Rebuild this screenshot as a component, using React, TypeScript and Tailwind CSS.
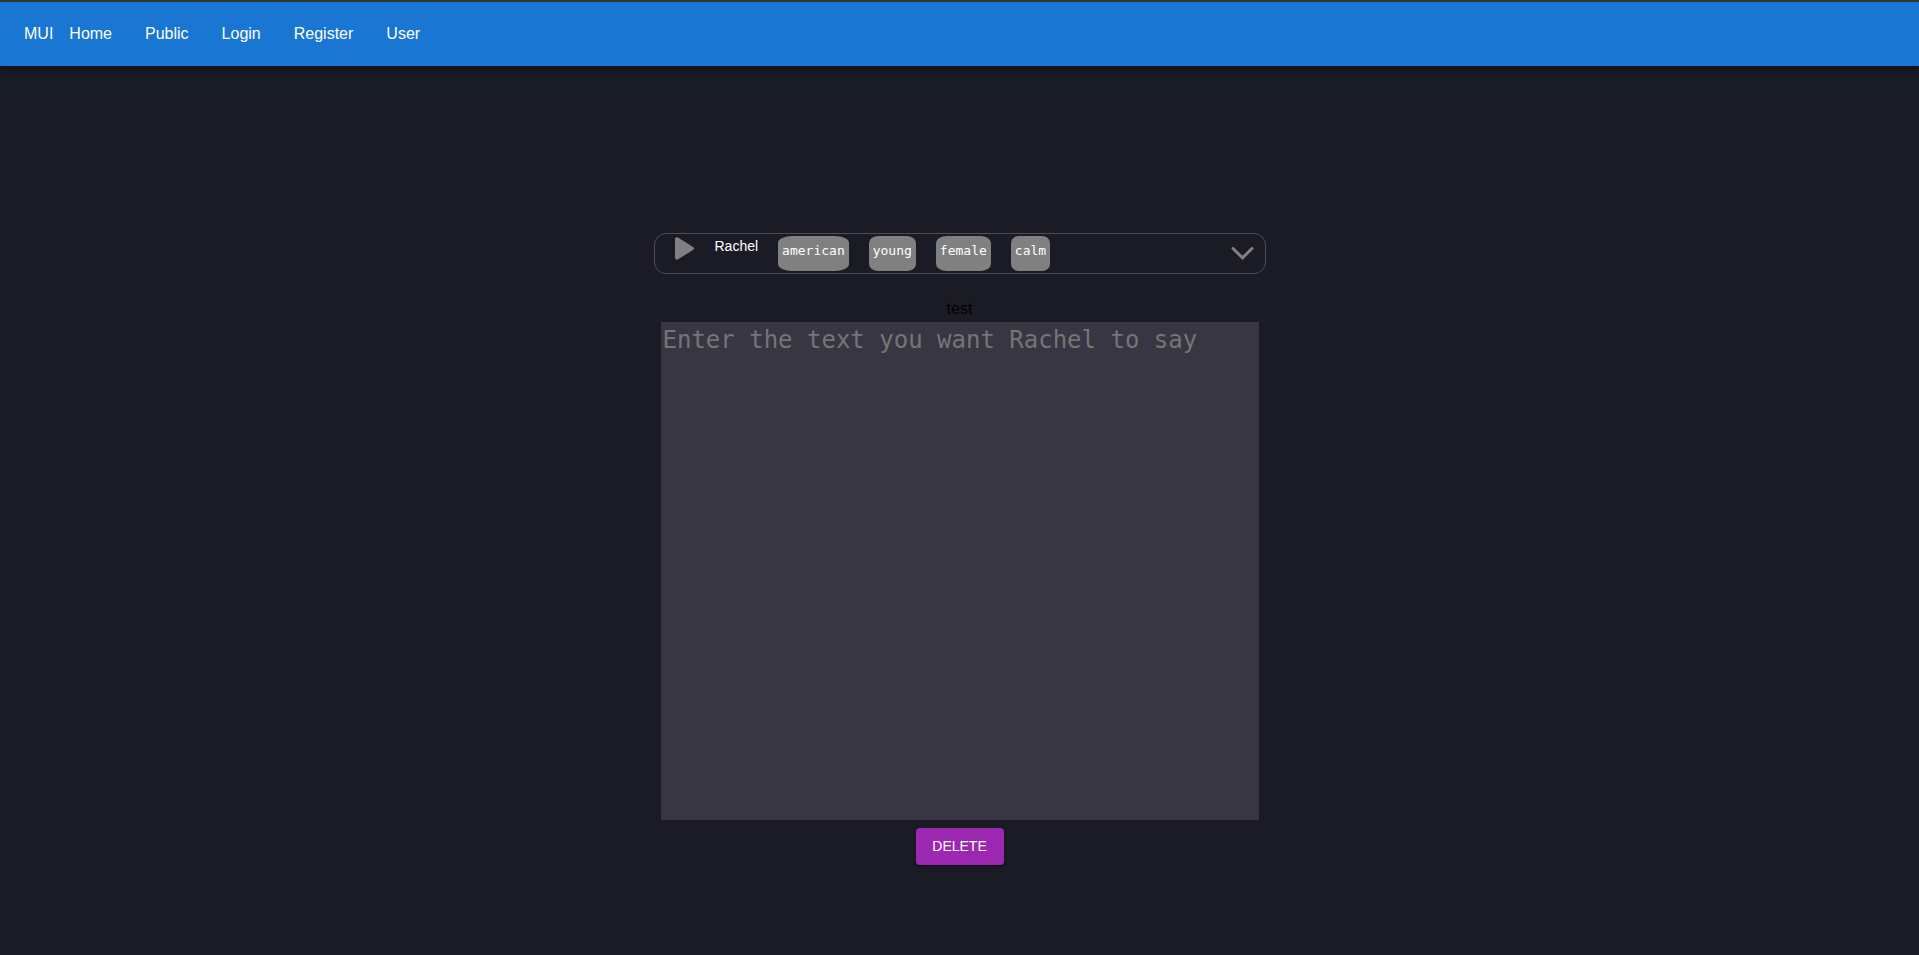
const links = ['Home', 'Public', 'Login', 'Register', 'User'];
const labels = ['american', 'young', 'female', 'calm'];

function NavBar() {
  return (
    <header className="border-t-2 border-[#333333] bg-[#1976d2] text-white shadow-[0_2px_4px_-1px_rgba(0,0,0,0.2),0_4px_5px_rgba(0,0,0,0.14),0_1px_10px_rgba(0,0,0,0.12)]">
      <nav className="flex h-16 items-center gap-4 px-6 text-base">
        <a href="#mui">MUI</a>
        <ul className="flex items-center gap-[33px]">
          {links.map((link) => (
            <li key={link}>
              <a href={`#${link.toLowerCase()}`}>{link}</a>
            </li>
          ))}
        </ul>
      </nav>
    </header>
  );
}

function VoicePicker() {
  return (
    <div className="flex w-full max-w-[612px] items-start rounded-xl border border-[#4d4c59] pt-0.5 pr-2.5 pb-0.5 pl-5">
      <button type="button" aria-label="Play sample" className="mt-px">
        <svg width="20" height="23" viewBox="0 0 20 23" fill="#808080">
          <path d="M0 2.4C0 .6 1.5-.2 3 .6L18 9.9c1.4.9 1.4 2.2 0 3.100L3 22.300C1.500 23.200 0 22.500 0 20.600Z" />
        </svg>
      </button>
      <span className="ml-5 text-sm leading-5 text-white">Rachel</span>
      <ul className="ml-5 flex gap-5">
        {labels.map((label) => (
          <li
            key={label}
            className="h-[35px] rounded-[20%] bg-[#808080] px-1 pt-1.5 font-['DejaVu_Sans_Mono',monospace] text-[13px] leading-[18px] text-white"
          >
            {label}
          </li>
        ))}
      </ul>
      <button type="button" aria-label="Show voices" className="ml-auto self-center">
        <svg width="24" height="14" viewBox="0 0 24 14" fill="none" stroke="#808080" strokeWidth="3" strokeLinecap="round">
          <path d="M2 1.500 11.500 10.800 21 1.500" />
        </svg>
      </button>
    </div>
  );
}

export default function App() {
  return (
    <div className="min-h-screen bg-[#1b1b26] font-['Liberation_Sans',Arial,sans-serif]">
      <NavBar />
      <main className="flex flex-col items-center pt-[167px] pb-20">
        <VoicePicker />
        <label htmlFor="speech" className="mt-[23px] pb-px leading-6 text-black">
          test
        </label>
        <textarea
          id="speech"
          placeholder="Enter the text you want Rachel to say"
          className="block h-[498px] w-full max-w-[598px] resize-none bg-[#383643] p-0.5 font-['DejaVu_Sans_Mono',monospace] text-2xl leading-8 text-white outline-none placeholder:text-[#757575]"
        />
        <button
          type="button"
          className="mt-2 min-w-[88px] rounded bg-[#9c27b0] px-4 py-1.5 text-sm leading-[25px] text-white shadow-[0_3px_1px_-2px_rgba(0,0,0,0.2),0_2px_2px_rgba(0,0,0,0.14),0_1px_5px_rgba(0,0,0,0.12)]"
        >
          DELETE
        </button>
      </main>
    </div>
  );
}
